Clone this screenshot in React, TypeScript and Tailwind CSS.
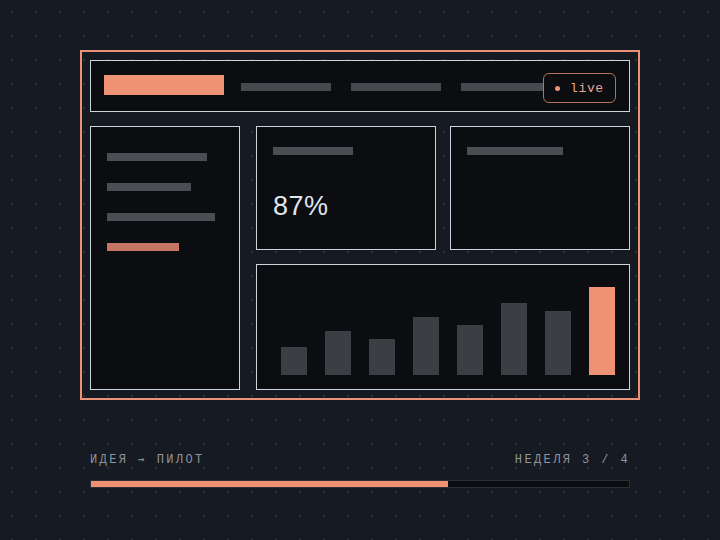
const navBars = [90, 90, 90];
const sideLines = [
  { w: 100, accent: false },
  { w: 84, accent: false },
  { w: 108, accent: false },
  { w: 72, accent: true },
];
const weekly = [28, 44, 36, 58, 50, 72, 64, 88];

const Panel = ({ className = "", children }: { className?: string; children?: React.ReactNode }) => (
  <div className={`border border-[#cdd4de] bg-[#0b0d11] ${className}`}>{children}</div>
);

const App = () => {
  return (
    <div className="w-[720px] h-[540px] overflow-hidden bg-[#161a22] bg-[radial-gradient(circle,#2c313b_1px,transparent_1.6px)] bg-[size:24px_24px] pt-[50px] font-['Liberation_Mono',monospace]">
      <div className="w-[560px] mx-auto">
        {/* mock dashboard window */}
        <div className="h-[350px] border-2 border-[#ec9276] p-2 flex flex-col">
          <Panel className="relative h-[52px] shrink-0 flex items-center px-[13px]">
            <div className="w-[120px] h-[20px] bg-[#ef9274] -mt-[2px]" />
            <div className="flex gap-5 ml-[17px] mt-[1px]">
              {navBars.map((w, i) => (
                <div key={i} className="h-[8px] bg-[#46494e]" style={{ width: w }} />
              ))}
            </div>
            <div className="absolute right-[13px] top-[12px] h-[30px] w-[73px] rounded-[6px] border border-[#b8705f] bg-[#0b0d11] flex items-center pl-[11px] gap-[10px]">
              <span className="w-[5px] h-[5px] rounded-full bg-[#f0907a]" />
              <span className="text-[13px] tracking-[0.05em] text-[#e6a893] leading-none">live</span>
            </div>
          </Panel>

          <div className="flex gap-4 mt-[14px] flex-1">
            <Panel className="w-[150px] pt-[26px] px-4 flex flex-col gap-[22px]">
              {sideLines.map((l, i) => (
                <div
                  key={i}
                  className={`h-[8px] ${l.accent ? "bg-[#c47563]" : "bg-[#4a4d52]"}`}
                  style={{ width: l.w }}
                />
              ))}
            </Panel>

            <div className="flex-1 flex flex-col gap-[14px]">
              <div className="grid grid-cols-2 gap-[14px] h-[124px]">
                <Panel className="pt-[20px] px-4">
                  <div className="w-[80px] h-[8px] bg-[#4a4d52]" />
                  <div className="mt-[38px] text-[27px] leading-none text-[#dfe5ec] font-['Liberation_Sans',sans-serif] tracking-[0.02em]">
                    87%
                  </div>
                </Panel>
                <Panel className="pt-[20px] px-4">
                  <div className="w-[96px] h-[8px] bg-[#4a4d52]" />
                </Panel>
              </div>

              <Panel className="flex-1 flex items-end gap-[18px] pl-[24px] pb-[14px]">
                {weekly.map((h, i) => (
                  <div
                    key={i}
                    className={`w-[26px] ${i === weekly.length - 1 ? "bg-[#ef9274]" : "bg-[#3b3e43]"}`}
                    style={{ height: h }}
                  />
                ))}
              </Panel>
            </div>
          </div>
        </div>

        {/* progress footer */}
        <div className="px-[10px] mt-[52px]">
          <div className="flex justify-between text-[12px] leading-4 tracking-[0.2em] text-[#8f959e]">
            <span>
              ИДЕЯ <span className="font-['DejaVu_Sans_Mono',monospace] text-[11px]">→</span> ПИЛОТ
            </span>
            <span>НЕДЕЛЯ 3 / 4</span>
          </div>
          <div className="mt-[12px] h-[8px] border border-[#2a2f38] bg-[#0b0d11]">
            <div className="h-full bg-[#ef9274]" style={{ width: "66.3%" }} />
          </div>
        </div>
      </div>
    </div>
  );
};

export default App;
